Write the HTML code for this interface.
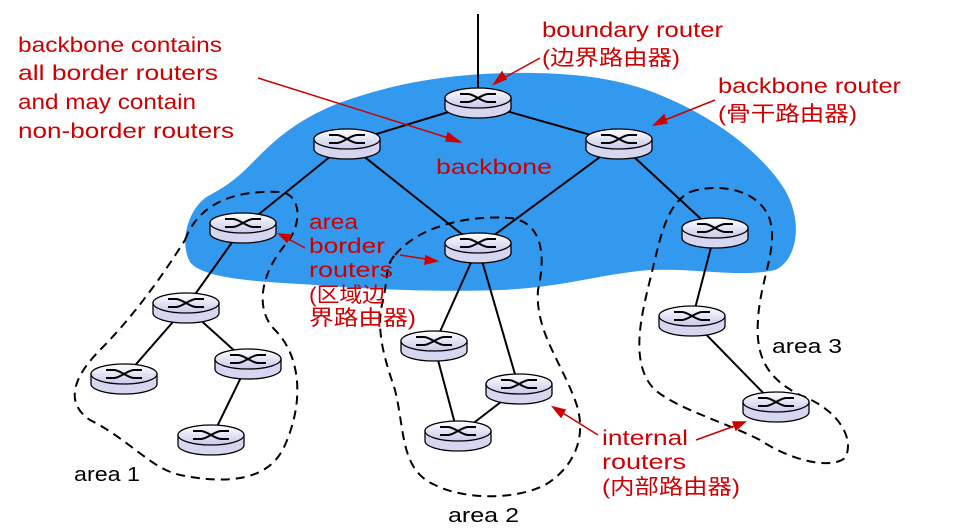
<!DOCTYPE html>
<html><head><meta charset="utf-8"><style>
html,body{margin:0;padding:0;background:#fff;}
svg{display:block}
.r{fill:#c00;font-family:"Liberation Sans","Noto Sans CJK SC",sans-serif;font-size:21px}
.k{fill:#000;font-family:"Liberation Sans",sans-serif;font-size:20px}
</style></head><body>
<svg width="953" height="530" viewBox="0 0 953 530" xmlns="http://www.w3.org/2000/svg">
<defs>
<linearGradient id="g" x1="0" y1="0" x2="0" y2="1"><stop offset="0" stop-color="#ffffff"/><stop offset="1" stop-color="#c8c8ec"/></linearGradient>
<g id="rt">
<path d="M-33,0 v10 a33,10 0 0 0 66,0 v-10 z" fill="#d6d6f0" stroke="#000" stroke-width="1.3"/>
<ellipse cx="0" cy="0" rx="33" ry="10" fill="url(#g)" stroke="#000" stroke-width="1.3"/>
<path d="M-18,-4 h8 c6,0 14,8 20,8 h8 M-18,4 h8 c6,0 14,-8 20,-8 h8" fill="none" stroke="#000" stroke-width="2"/>
</g>
</defs>
<path d="M190,262 C178,240 190,205 210,195 C235,182 245,170 260,155 C290,125 320,108 360,96 C410,80 460,74 510,73 C570,72 620,78 660,95 C710,115 760,150 785,190 C805,225 795,262 775,270 C740,278 700,268 650,270 C600,274 560,288 500,290 C440,292 380,290 330,286 C280,282 205,282 190,262 Z" fill="#3399ee"/>
<g stroke="#000" stroke-width="2" fill="none">
<line x1="478" y1="14" x2="478" y2="95"/>
<line x1="478" y1="103" x2="347" y2="143"/>
<line x1="478" y1="103" x2="619" y2="143"/>
<line x1="347" y1="143" x2="243" y2="227"/>
<line x1="347" y1="143" x2="478" y2="247"/>
<line x1="619" y1="143" x2="478" y2="247"/>
<line x1="619" y1="143" x2="715" y2="232"/>
<line x1="243" y1="227" x2="186" y2="307"/>
<line x1="186" y1="307" x2="124" y2="378"/>
<line x1="186" y1="307" x2="248" y2="363"/>
<line x1="248" y1="363" x2="211" y2="439"/>
<line x1="478" y1="247" x2="434" y2="345"/>
<line x1="478" y1="247" x2="519" y2="388"/>
<line x1="434" y1="345" x2="458" y2="435"/>
<line x1="519" y1="388" x2="458" y2="435"/>
<line x1="715" y1="232" x2="692" y2="320"/>
<line x1="692" y1="320" x2="776" y2="406"/>
</g>
<g stroke="#000" stroke-width="2" fill="none" stroke-dasharray="9,6">
<path d="M185,240 C200,200 240,190 280,192 C305,195 300,230 285,245 C260,275 255,310 275,330 C300,355 305,400 285,445 C270,480 230,485 180,475 C150,468 130,440 90,420 C60,400 80,370 100,350 C130,320 160,280 185,240 Z"/>
<path d="M395,255 C420,225 470,215 510,218 C545,222 545,260 538,290 C535,330 560,360 575,400 C590,440 570,470 545,485 C515,500 465,500 435,485 C400,470 405,430 395,390 C385,360 375,330 383,300 C388,280 385,265 395,255 Z"/>
<path d="M690,192 C720,182 760,190 770,220 C778,250 760,280 758,320 C755,360 770,380 800,395 C840,410 855,440 845,458 C830,470 790,460 760,440 C720,420 680,410 655,390 C630,365 640,320 650,280 C660,240 665,205 690,192 Z"/>
</g>
<use href="#rt" x="478" y="98"/>
<use href="#rt" x="347" y="139"/>
<use href="#rt" x="619" y="139"/>
<use href="#rt" x="243" y="223"/>
<use href="#rt" x="478" y="243"/>
<use href="#rt" x="715" y="228"/>
<use href="#rt" x="186" y="303"/>
<use href="#rt" x="124" y="374"/>
<use href="#rt" x="248" y="359"/>
<use href="#rt" x="211" y="435"/>
<use href="#rt" x="434" y="341"/>
<use href="#rt" x="519" y="384"/>
<use href="#rt" x="458" y="431"/>
<use href="#rt" x="692" y="316"/>
<use href="#rt" x="776" y="402"/>
<g stroke="#c00" stroke-width="1.5" fill="#c00">
<line x1="258" y1="78" x2="455" y2="140"/><path d="M460,142 l-12,-9 l-2,8 z"/>
<line x1="540" y1="58" x2="500" y2="80"/><path d="M494,84 l8,-12 l4,7 z"/>
<line x1="715" y1="100" x2="660" y2="122"/><path d="M654,125 l10,-10 l3,8 z"/>
<line x1="305" y1="248" x2="283" y2="236"/><path d="M279,234 l12,1 l-4,7 z"/>
<line x1="400" y1="255" x2="432" y2="260"/><path d="M437,261 l-11,-5 l-1,8 z"/>
<line x1="598" y1="435" x2="558" y2="410"/><path d="M553,407 l8,10 l4,-7 z"/>
<line x1="696" y1="440" x2="740" y2="424"/><path d="M745,422 l-12,0 l3,8 z"/>
</g>
<g lengthAdjust="spacingAndGlyphs">
<text class="r" x="18" y="52" textLength="204" lengthAdjust="spacingAndGlyphs">backbone contains</text>
<text class="r" x="18" y="80" textLength="200" lengthAdjust="spacingAndGlyphs">all border routers</text>
<text class="r" x="18" y="109" textLength="178" lengthAdjust="spacingAndGlyphs">and may contain</text>
<text class="r" x="18" y="138" textLength="216" lengthAdjust="spacingAndGlyphs">non-border routers</text>
<text class="r" x="542" y="37" textLength="181" lengthAdjust="spacingAndGlyphs">boundary router</text>
<text class="r" x="542" y="65" textLength="138" lengthAdjust="spacingAndGlyphs">(边界路由器)</text>
<text class="r" x="718" y="93" textLength="183" lengthAdjust="spacingAndGlyphs">backbone router</text>
<text class="r" x="718" y="121" textLength="139" lengthAdjust="spacingAndGlyphs">(骨干路由器)</text>
<text class="r" x="436" y="174" font-size="23" textLength="116" lengthAdjust="spacingAndGlyphs">backbone</text>
<text class="r" x="309" y="229" textLength="49" lengthAdjust="spacingAndGlyphs">area</text>
<text class="r" x="309" y="253" textLength="76" lengthAdjust="spacingAndGlyphs">border</text>
<text class="r" x="309" y="277" textLength="84" lengthAdjust="spacingAndGlyphs">routers</text>
<text class="r" x="309" y="302" textLength="76" lengthAdjust="spacingAndGlyphs">(区域边</text>
<text class="r" x="309" y="325" textLength="107" lengthAdjust="spacingAndGlyphs">界路由器)</text>
<text class="r" x="602" y="445" textLength="86" lengthAdjust="spacingAndGlyphs">internal</text>
<text class="r" x="602" y="469" textLength="84" lengthAdjust="spacingAndGlyphs">routers</text>
<text class="r" x="602" y="494" textLength="138" lengthAdjust="spacingAndGlyphs">(内部路由器)</text>
<text class="k" x="74" y="481" textLength="66" lengthAdjust="spacingAndGlyphs">area 1</text>
<text class="k" x="448" y="522" textLength="71" lengthAdjust="spacingAndGlyphs">area 2</text>
<text class="k" x="772" y="353" textLength="70" lengthAdjust="spacingAndGlyphs">area 3</text>
</g>
</svg>
</body></html>
